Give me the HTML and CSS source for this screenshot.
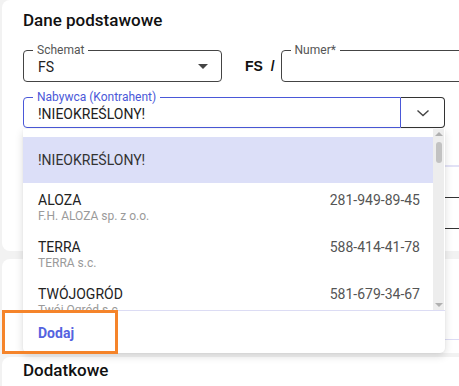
FILE: index.html
```html
<!DOCTYPE html>
<html lang="pl">
<head>
<meta charset="utf-8">
<link rel="stylesheet" href="styles.css">
</head>
<body>
<div class="page">
  <section class="card card-main">
    <h2 class="card-title">Dane podstawowe</h2>
    <div class="row row-top">
      <div class="field field-select">
        <span class="field-label">Schemat</span>
        <span class="field-value">FS</span>
        <span class="caret"></span>
      </div>
      <span class="prefix">FS&nbsp; /</span>
      <div class="field field-number">
        <span class="field-label">Numer*</span>
      </div>
    </div>
    <div class="row row-buyer">
      <div class="buyer">
        <div class="field field-buyer">
          <span class="field-label label-active">Nabywca (Kontrahent)</span>
          <span class="field-value">!NIEOKREŚLONY!</span>
        </div>
        <div class="buyer-btn">
          <svg width="16" height="10" viewBox="0 0 16 10"><path d="M2.5 2.5 L8 7.5 L13.5 2.5" fill="none" stroke="#444" stroke-width="1.4"/></svg>
        </div>
        <div class="dropdown">
          <div class="dd-list">
            <div class="dd-items">
              <div class="dd-item dd-item-active">
                <div class="dd-main"><span class="dd-name">!NIEOKREŚLONY!</span></div>
              </div>
              <div class="dd-item">
                <div class="dd-main"><span class="dd-name">ALOZA</span><span class="dd-nip">281-949-89-45</span></div>
                <div class="dd-sub">F.H. ALOZA sp. z o.o.</div>
              </div>
              <div class="dd-item">
                <div class="dd-main"><span class="dd-name">TERRA</span><span class="dd-nip">588-414-41-78</span></div>
                <div class="dd-sub">TERRA s.c.</div>
              </div>
              <div class="dd-item">
                <div class="dd-main"><span class="dd-name">TWÓJOGRÓD</span><span class="dd-nip">581-679-34-67</span></div>
                <div class="dd-sub">Twój Ogród s.c.</div>
              </div>
            </div>
            <div class="scrollbar">
              <span class="sb-arrow sb-up"></span>
              <span class="sb-thumb"></span>
              <span class="sb-arrow sb-down"></span>
            </div>
          </div>
          <div class="dd-footer">
            <span class="dd-add">Dodaj</span>
          </div>
        </div>
      </div>
    </div>
    <div class="bg-rows">
      <div class="bg-line-light"></div>
      <div class="bg-line-dark"></div>
      <div class="bg-line-dark"></div>
    </div>
  </section>
  <section class="card card-second">
    <div class="bg-line-light2"></div>
  </section>
  <section class="card card-third">
    <h2 class="card-title">Dodatkowe</h2>
  </section>
  <div class="highlight-box"></div>
</div>
</body>
</html>
```
FILE: styles.css
```css
* { box-sizing: border-box; }
html, body {
  margin: 0;
  padding: 0;
  background: #f2f2f2;
  overflow: hidden;
  width: 459px;
  height: 386px;
}
body {
  font-family: Roboto, "Liberation Sans", sans-serif;
  color: #222;
}
.page {
  position: relative;
  padding-left: 2px;
  display: flex;
  flex-direction: column;
  gap: 8px;
  width: 560px;
}
.card {
  background: #fff;
  border-radius: 8px;
  padding-left: 21px;
}
.card-main {
  height: 251px;
  padding-top: 10px;
}
.card-title {
  margin: 0;
  font-size: 17px;
  line-height: 20px;
  font-weight: 500;
  color: #111;
}
.row {
  display: flex;
  align-items: center;
}
.row-top {
  margin-top: 20px;
}
.field {
  position: relative;
  height: 32px;
  border: 1px solid #444;
  border-radius: 4px;
  display: flex;
  align-items: center;
  padding-left: 14px;
}
.field-label {
  position: absolute;
  top: -8px;
  left: 9px;
  padding: 0 4px;
  background: #fff;
  font-size: 12px;
  line-height: 14px;
  color: #555;
}
.field-value {
  font-size: 14px;
  color: #222;
  padding-top: 2px;
}
.field-select {
  width: 199px;
}
.caret {
  position: absolute;
  right: 13px;
  top: 13px;
  width: 0;
  height: 0;
  border-left: 5px solid transparent;
  border-right: 5px solid transparent;
  border-top: 5px solid #444;
}
.prefix {
  margin-left: 23px;
  font-family: "Liberation Sans", Arial, sans-serif;
  font-weight: 700;
  font-size: 14px;
  color: #111;
}
.field-number {
  margin-left: 6px;
  width: 220px;
}
.row-buyer {
  margin-top: 15px;
}
.buyer {
  position: relative;
  display: flex;
  width: 422px;
}
.field-buyer {
  width: 378px;
  height: 31px;
  border-color: #4a58d8;
  border-radius: 4px 0 0 4px;
}
.label-active {
  color: #4a58d8;
}
.buyer-btn {
  width: 44px;
  height: 31px;
  border: 1px solid #333;
  border-left: none;
  border-radius: 0 4px 4px 0;
  display: flex;
  align-items: center;
  justify-content: center;
}
.dropdown {
  position: absolute;
  top: 32px;
  left: 0;
  width: 422px;
  height: 224px;
  background: #fff;
  border-radius: 0 0 5px 5px;
  box-shadow: 0 3px 8px rgba(0, 0, 0, 0.14), 0 0 2px rgba(0, 0, 0, 0.06);
  display: flex;
  flex-direction: column;
  z-index: 5;
}
.dd-list {
  height: 181px;
  display: flex;
  overflow: hidden;
}
.dd-items {
  flex: 1;
  padding-top: 8px;
  overflow: hidden;
}
.dd-item {
  height: 47px;
  padding: 9px 13px 0 15px;
}
.dd-item-active {
  height: 46px;
  background: #dcdff8;
  display: flex;
  align-items: center;
  padding-top: 0;
}
.dd-main {
  display: flex;
  justify-content: space-between;
  align-items: center;
  height: 16px;
  width: 100%;
}
.dd-name {
  font-size: 14px;
  color: #222;
}
.dd-item-active .dd-name {
  color: #333;
}
.dd-nip {
  font-size: 14px;
  color: #555;
}
.dd-sub {
  margin-top: 1px;
  font-size: 12px;
  line-height: 14px;
  color: #9a9a9a;
}
.scrollbar {
  position: relative;
  width: 11px;
  margin-right: 1px;
  background: #ededed;
}
.sb-thumb {
  position: absolute;
  left: 3px;
  top: 13px;
  width: 6px;
  height: 21px;
  border-radius: 3px;
  background: #c2c2c2;
}
.sb-arrow {
  position: absolute;
  left: 2px;
  width: 0;
  height: 0;
  border-left: 4px solid transparent;
  border-right: 4px solid transparent;
}
.sb-up {
  top: 3px;
  border-bottom: 4px solid #b0b0b0;
}
.sb-down {
  bottom: 3px;
  border-top: 4px solid #b0b0b0;
}
.dd-footer {
  flex: 1;
  border-top: 1px solid #dcdcf4;
  display: flex;
  align-items: center;
  padding-left: 15px;
}
.dd-add {
  font-size: 14px;
  font-weight: 700;
  color: #5563e0;
  padding-top: 2px;
}
.bg-rows {
  margin-top: 37px;
  display: flex;
  flex-direction: column;
}
.bg-line-light {
  height: 2px;
  background: #e2e2f6;
}
.bg-line-dark {
  height: 1px;
  background: #333;
  margin-top: 30px;
}
.card-second {
  height: 94px;
  padding-top: 80px;
}
.bg-line-light2 {
  height: 1px;
  background: #dcdcf4;
}
.card-third {
  margin-top: -4px;
  height: 40px;
  padding-top: 3px;
}
.highlight-box {
  position: absolute;
  left: 2px;
  top: 310px;
  width: 116px;
  height: 44px;
  border: 3px solid #f5842a;
  z-index: 10;
}
```
